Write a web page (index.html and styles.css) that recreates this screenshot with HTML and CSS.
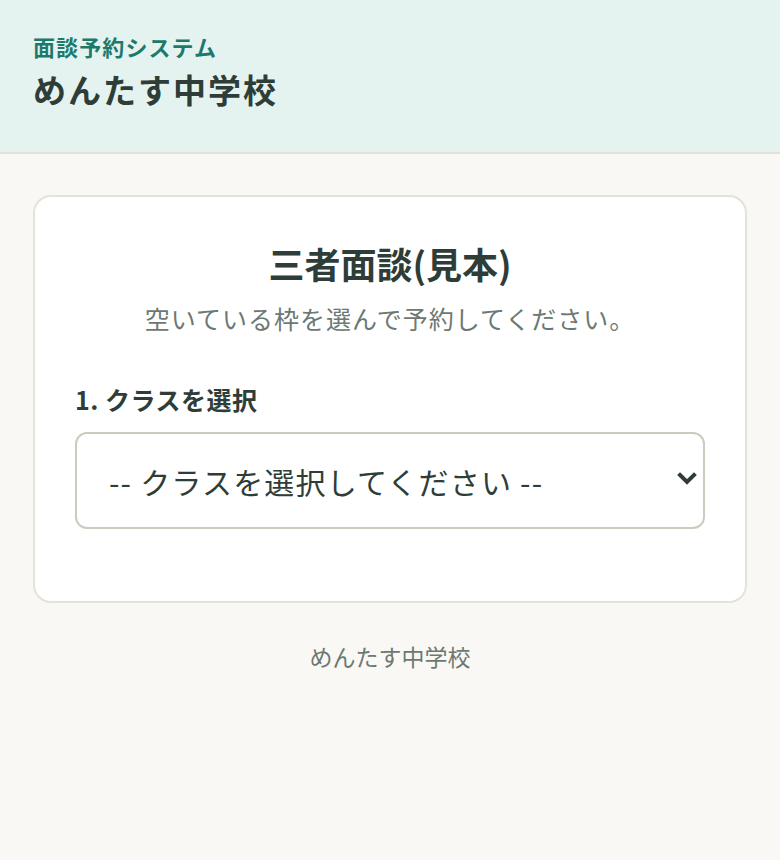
FILE: index.html
```html
<!DOCTYPE html>
<html lang="ja">
<head>
<meta charset="utf-8">
<title>面談予約システム</title>
<link rel="stylesheet" href="styles.css">
</head>
<body>
<header class="site-header">
  <p class="system-name">面談予約システム</p>
  <h1 class="school-name">めんたす中学校</h1>
</header>
<main class="main">
  <section class="card">
    <h2 class="card-title">三者面談(見本)</h2>
    <p class="card-lead">空いている枠を選んで予約してください。</p>
    <label class="field-label" for="class-select">1. クラスを選択</label>
    <div class="select-wrap">
      <select class="class-select" id="class-select">
        <option>-- クラスを選択してください --</option>
      </select>
      <svg class="select-arrow" width="20" height="14" viewBox="0 0 20 14" aria-hidden="true">
        <path d="M3 3 L10 10 L17 3" fill="none" stroke="#2f3d38" stroke-width="4" stroke-linecap="square" stroke-linejoin="miter"/>
      </svg>
    </div>
  </section>
  <footer class="site-footer">めんたす中学校</footer>
</main>
</body>
</html>
```
FILE: styles.css
```css
* { box-sizing: border-box; }
html, body {
  margin: 0;
  padding: 0;
}
body {
  background: #f9f8f4;
  color: #2f3d38;
  font-family: "Noto Sans CJK JP", "Noto Sans", sans-serif;
  min-height: 860px;
}
.site-header {
  background: #e5f3f0;
  border-bottom: 2px solid #e2e0d9;
  padding: 31px 33px 0;
  height: 154px;
}
.system-name {
  margin: 0;
  color: #1c7a6c;
  font-size: 22px;
  font-weight: 700;
  line-height: 30px;
  letter-spacing: 0.05em;
}
.school-name {
  margin: 8px 0 0;
  color: #2f3d38;
  font-size: 33px;
  font-weight: 700;
  line-height: 40px;
  letter-spacing: 0.06em;
}
.main {
  padding: 41px 33px 0;
}
.card {
  background: #ffffff;
  border: 2px solid #e4e2da;
  border-radius: 18px;
  padding: 42px 40px 72px;
  display: flex;
  flex-direction: column;
}
.card-title {
  margin: 0;
  text-align: center;
  font-size: 36px;
  font-weight: 700;
  line-height: 48px;
  color: #2f3d38;
}
.card-lead {
  margin: 13px 0 0;
  text-align: center;
  font-size: 25px;
  line-height: 36px;
  letter-spacing: 0.04em;
  color: #6d7873;
}
.field-label {
  margin-top: 47px;
  font-size: 25px;
  font-weight: 700;
  line-height: 32px;
  letter-spacing: 0.02em;
  color: #2f3d38;
}
.select-wrap {
  position: relative;
  margin-top: 17px;
}
.class-select {
  display: block;
  height: 97px;
  width: 100%;
  border: 2px solid #cdcabf;
  border-radius: 12px;
  background: #ffffff;
  color: #2f3d38;
  font-family: "Noto Sans CJK JP", "Noto Sans", sans-serif;
  font-size: 30px;
  letter-spacing: 0.04em;
  padding: 0 60px 0 32px;
  -webkit-appearance: none;
  appearance: none;
}
.select-arrow {
  position: absolute;
  right: 8px;
  top: 40px;
  pointer-events: none;
}
.site-footer {
  margin-top: 38px;
  text-align: center;
  font-size: 23px;
  line-height: 30px;
  color: #6d7873;
}
```
